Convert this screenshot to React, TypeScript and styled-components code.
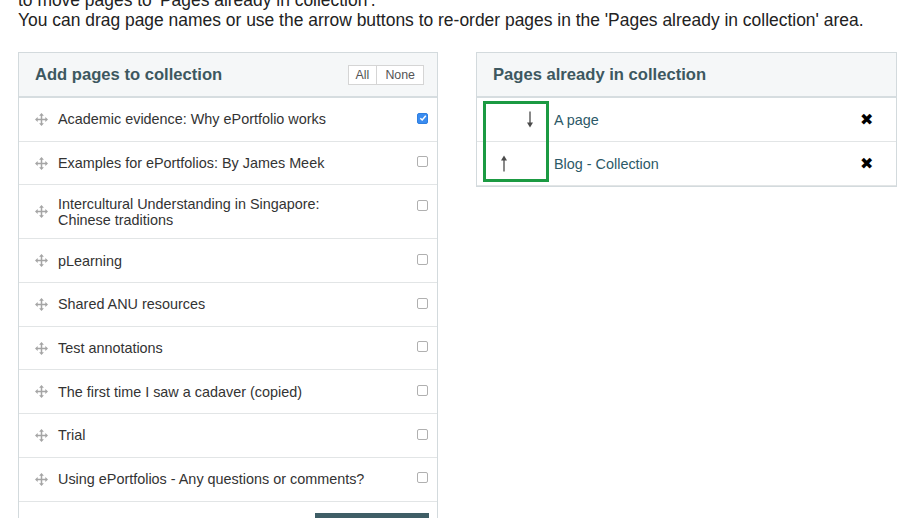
import React from 'react';
import styled, { createGlobalStyle } from 'styled-components';

const GlobalStyle = createGlobalStyle`
  html, body {
    margin: 0;
    padding: 0;
    background: #ffffff;
    overflow: hidden;
  }
  body {
    font-family: "Liberation Sans", Arial, Helvetica, sans-serif;
    color: #333333;
  }
`;

const Page = styled.div`
  padding: 0 23px 0 18px;
  width: 920px;
  box-sizing: border-box;
`;

const Intro = styled.p`
  margin: -10px 0 22px 0;
  font-size: 17.45px;
  line-height: 20px;
  color: #222;
  white-space: nowrap;
`;

const Columns = styled.div`
  display: grid;
  grid-template-columns: 420px 421px;
  column-gap: 38px;
  align-items: start;
`;

const Panel = styled.div`
  position: relative;
  border: 1px solid #d3dadd;
  background: #fff;
`;

const PanelHeader = styled.div`
  display: flex;
  align-items: center;
  justify-content: space-between;
  height: 43px;
  padding: 0 13px 0 16px;
  background: #f5f7f8;
  border-bottom: 2px solid #d6dde0;
`;

const PanelTitle = styled.h3`
  margin: 0;
  font-size: 16.6px;
  font-weight: bold;
  color: #3d5860;
`;

const ButtonGroup = styled.div`
  display: flex;
`;

const SmallButton = styled.button<{ $wide?: boolean }>`
  height: 20px;
  padding: 0 ${(p) => (p.$wide ? '8px' : '7px')};
  border: 1px solid #d5d5d5;
  margin-left: -1px;
  background: #fff;
  color: #555;
  font-family: inherit;
  font-size: 12.4px;
  line-height: 18px;
`;

const Row = styled.div`
  display: flex;
  align-items: center;
  min-height: 43.7px;
  box-sizing: border-box;
  padding: 10.5px 9px 10.5px 16px;
  border-bottom: 1px solid #e2e5e6;
  font-size: 14.4px;
  line-height: 16px;
`;

const Handle = styled.span`
  display: inline-flex;
  width: 14px;
  margin-right: 9px;
  align-self: center;
`;

const RowLabel = styled.span`
  flex: 1;
  color: #333;
`;

const Check = styled.span<{ $on?: boolean }>`
  align-self: flex-start;
  margin-top: 4px;
  width: 11px;
  height: 11px;
  box-sizing: border-box;
  border-radius: 2px;
  border: 1px solid ${(p) => (p.$on ? '#2f7fe0' : '#b0b0b0')};
  background: ${(p) => (p.$on ? '#3a8cf0' : '#fff')};
  display: flex;
  align-items: center;
  justify-content: center;
`;

const Footer = styled.div`
  display: flex;
  justify-content: flex-end;
  padding: 11px 8px 0 0;
`;

const SubmitButton = styled.button`
  width: 114px;
  height: 40px;
  border: none;
  background: #3f5e66;
  color: #fff;
  font-family: inherit;
  font-size: 14px;
`;

const OrderRow = styled.div`
  display: flex;
  align-items: center;
  height: 44px;
  box-sizing: border-box;
  border-bottom: 1px solid #e2e5e6;
  font-size: 14.4px;
  &:last-child {
    border-bottom: none;
  }
`;

const ArrowCell = styled.div`
  display: flex;
  width: 72px;
  padding: 0 6px 0 14px;
  box-sizing: border-box;
`;

const ArrowSlot = styled.span`
  display: flex;
  justify-content: center;
  width: 26px;
`;

const PageLink = styled.a`
  flex: 1;
  color: #2c5967;
  text-decoration: none;
  padding-left: 5px;
`;

const Remove = styled.span`
  width: 40px;
  text-align: center;
  font-size: 16px;
  color: #000;
  padding-right: 10px;
`;

const Highlight = styled.div`
  position: absolute;
  left: 6px;
  top: 48px;
  width: 66px;
  height: 81px;
  box-sizing: border-box;
  border: 3px solid #1b9a42;
  pointer-events: none;
`;

const MoveIcon = () => (
  <svg width="13" height="13" viewBox="0 0 12 12" fill="#a5a5a5">
    <rect x="5.3" y="1.5" width="1.4" height="9" />
    <rect x="1.5" y="5.3" width="9" height="1.4" />
    <polygon points="6,0 8.2,2.5 3.8,2.5" />
    <polygon points="6,12 8.2,9.5 3.8,9.5" />
    <polygon points="0,6 2.5,3.8 2.5,8.2" />
    <polygon points="12,6 9.5,3.8 9.5,8.2" />
  </svg>
);

const Tick = () => (
  <svg width="8" height="8" viewBox="0 0 8 8">
    <path d="M1.3 4.2 L3.2 6 L6.8 1.8" stroke="#fff" strokeWidth="1.5" fill="none" />
  </svg>
);

const Arrow = ({ up }: { up?: boolean }) => (
  <svg width="8" height="17" viewBox="0 0 8 17">
    <g transform={up ? 'rotate(180 4 8.5)' : undefined} fill="#4a4a4a">
      <rect x="3.35" y="0.5" width="1.3" height="12.5" />
      <polygon points="1,11.5 7,11.5 4,16.5" />
    </g>
  </svg>
);

const pages = [
  { title: 'Academic evidence: Why ePortfolio works', checked: true },
  { title: 'Examples for ePortfolios: By James Meek' },
  { title: 'Intercultural Understanding in Singapore:\nChinese traditions' },
  { title: 'pLearning' },
  { title: 'Shared ANU resources' },
  { title: 'Test annotations' },
  { title: 'The first time I saw a cadaver (copied)' },
  { title: 'Trial' },
  { title: 'Using ePortfolios - Any questions or comments?' },
];

const App = () => {
  return (
    <>
      <GlobalStyle />
      <Page>
        <Intro>
          to move pages to 'Pages already in collection'.
          <br />
          You can drag page names or use the arrow buttons to re-order pages in the 'Pages already in collection' area.
        </Intro>
        <Columns>
          <Panel>
            <PanelHeader>
              <PanelTitle>Add pages to collection</PanelTitle>
              <ButtonGroup>
                <SmallButton>All</SmallButton>
                <SmallButton $wide>None</SmallButton>
              </ButtonGroup>
            </PanelHeader>
            {pages.map((p) => (
              <Row key={p.title}>
                <Handle>
                  <MoveIcon />
                </Handle>
                <RowLabel>
                  {p.title.split('\n').map((line, i) => (
                    <React.Fragment key={i}>
                      {i > 0 && <br />}
                      {line}
                    </React.Fragment>
                  ))}
                </RowLabel>
                <Check $on={p.checked}>{p.checked && <Tick />}</Check>
              </Row>
            ))}
            <Footer>
              <SubmitButton>Add pages</SubmitButton>
            </Footer>
          </Panel>
          <Panel>
            <PanelHeader>
              <PanelTitle>Pages already in collection</PanelTitle>
            </PanelHeader>
            <OrderRow>
              <ArrowCell>
                <ArrowSlot />
                <ArrowSlot>
                  <Arrow />
                </ArrowSlot>
              </ArrowCell>
              <PageLink href="#">A page</PageLink>
              <Remove>✖</Remove>
            </OrderRow>
            <OrderRow>
              <ArrowCell>
                <ArrowSlot>
                  <Arrow up />
                </ArrowSlot>
                <ArrowSlot />
              </ArrowCell>
              <PageLink href="#">Blog - Collection</PageLink>
              <Remove>✖</Remove>
            </OrderRow>
            <Highlight />
          </Panel>
        </Columns>
      </Page>
    </>
  );
};

export default App;
